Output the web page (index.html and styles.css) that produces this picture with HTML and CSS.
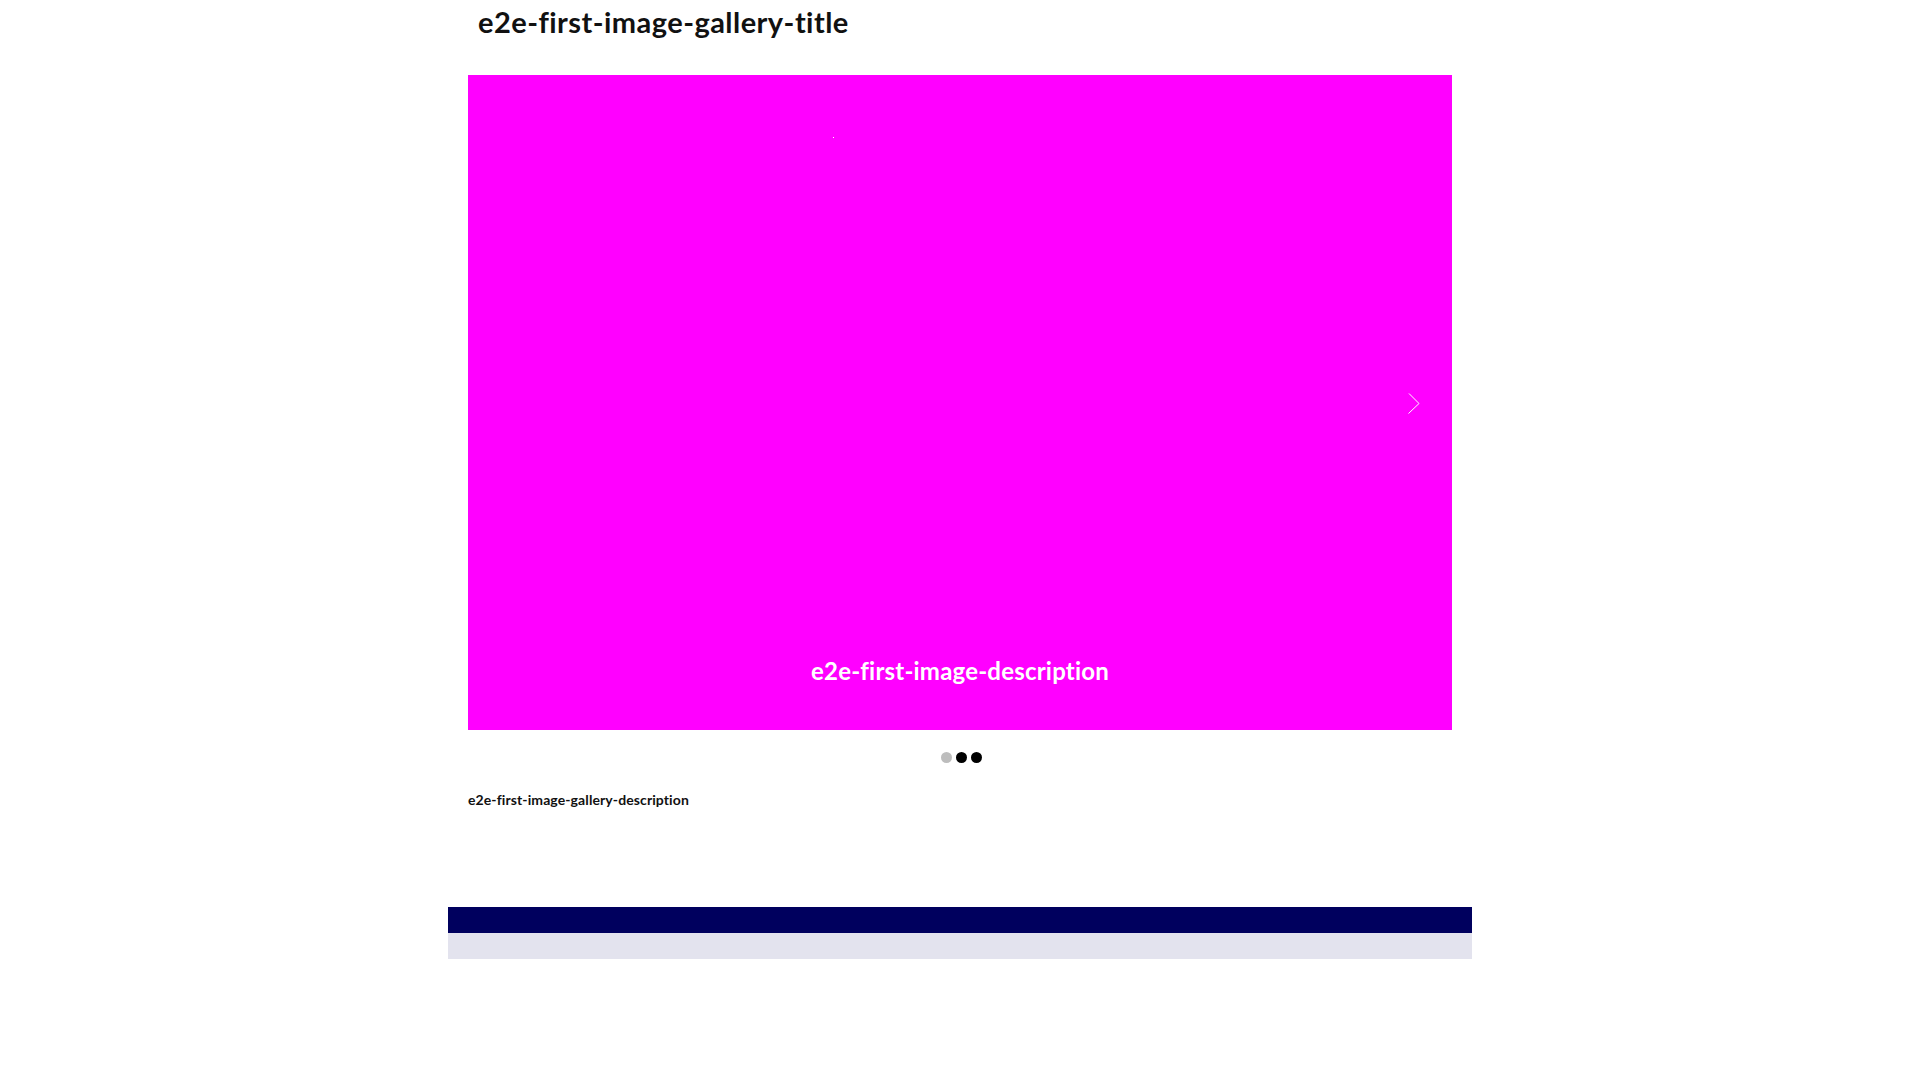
FILE: index.html
```html
<!DOCTYPE html>
<html>
<head>
<meta charset="utf-8">
<link rel="stylesheet" href="styles.css">
</head>
<body>
<div class="page">
  <section class="gallery">
    <h1 class="gallery-title">e2e-first-image-gallery-title</h1>
    <div class="slider">
      <div class="slide">
        <span class="speck"></span>
        <div class="caption">e2e-first-image-description</div>
        <button class="next" aria-label="next">
          <svg width="12" height="21" viewBox="0 0 12 21"><path d="M1 0.5 L11 10.5 L0.5 20.5" fill="none" stroke="#fff" stroke-width="1"/></svg>
        </button>
      </div>
    </div>
    <div class="dots">
      <span class="dot active"></span><span class="dot"></span><span class="dot"></span>
    </div>
    <p class="gallery-desc">e2e-first-image-gallery-description</p>
  </section>
  <footer class="footer">
    <div class="footer-top"></div>
    <div class="footer-bottom"></div>
  </footer>
</div>
</body>
</html>
```
FILE: styles.css
```css
html, body { margin: 0; padding: 0; background: #fff; }
body { font-family: "Lato", "Open Sans", "Liberation Sans", sans-serif; color: #111; }
.page { width: 1024px; margin: 0 auto; }
.gallery { padding: 0 20px; }
.gallery-title {
  margin: 0;
  padding: 4px 0 0 10px;
  height: 75px;
  box-sizing: border-box;
  font-size: 29px;
  font-weight: 700;
  line-height: 36px;
  letter-spacing: 0.45px;
}
.slider { position: relative; }
.slide {
  position: relative;
  height: 655px;
  background: #ff00ff;
  display: flex;
  align-items: flex-end;
  justify-content: center;
}
.speck { position: absolute; left: 365px; top: 62px; width: 1px; height: 1px; background: #fff; }
.caption {
  color: #fff;
  font-size: 24px;
  font-weight: 700;
  line-height: 30px;
  margin-bottom: 44px;
  letter-spacing: 0.2px;
}
.next {
  position: absolute;
  right: 32px;
  top: 318px;
  background: none;
  border: 0;
  padding: 0;
  width: 12px;
  height: 21px;
  cursor: pointer;
}
.next svg { display: block; }
.dots {
  display: flex;
  justify-content: center;
  gap: 4px;
  padding: 22px 0 0 2px;
  height: 11px;
}
.dot { width: 11px; height: 11px; border-radius: 50%; background: #000; }
.dot.active { background: #bdbdbd; }
.gallery-desc {
  margin: 28px 0 0;
  font-size: 14px;
  font-weight: 700;
  line-height: 18px;
  height: 116px;
  letter-spacing: 0.1px;
}
.footer-top { height: 26px; background: #00005e; }
.footer-bottom { height: 26px; background: #e3e3ee; }
```
